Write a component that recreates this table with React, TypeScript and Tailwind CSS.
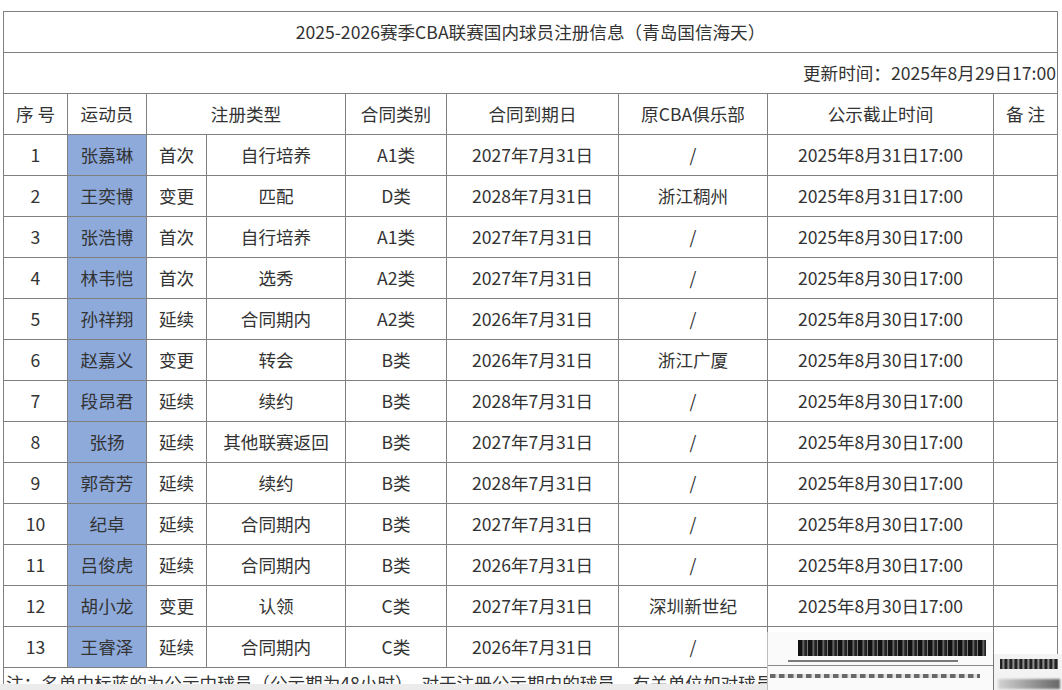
import React from "react";

const rows = [
  ["1", "张嘉琳", "首次", "自行培养", "A1类", "2027年7月31日", "/", "2025年8月31日17:00"],
  ["2", "王奕博", "变更", "匹配", "D类", "2028年7月31日", "浙江稠州", "2025年8月31日17:00"],
  ["3", "张浩博", "首次", "自行培养", "A1类", "2027年7月31日", "/", "2025年8月30日17:00"],
  ["4", "林韦恺", "首次", "选秀", "A2类", "2027年7月31日", "/", "2025年8月30日17:00"],
  ["5", "孙祥翔", "延续", "合同期内", "A2类", "2026年7月31日", "/", "2025年8月30日17:00"],
  ["6", "赵嘉义", "变更", "转会", "B类", "2026年7月31日", "浙江广厦", "2025年8月30日17:00"],
  ["7", "段昂君", "延续", "续约", "B类", "2028年7月31日", "/", "2025年8月30日17:00"],
  ["8", "张扬", "延续", "其他联赛返回", "B类", "2027年7月31日", "/", "2025年8月30日17:00"],
  ["9", "郭奇芳", "延续", "续约", "B类", "2028年7月31日", "/", "2025年8月30日17:00"],
  ["10", "纪卓", "延续", "合同期内", "B类", "2027年7月31日", "/", "2025年8月30日17:00"],
  ["11", "吕俊虎", "延续", "合同期内", "B类", "2026年7月31日", "/", "2025年8月30日17:00"],
  ["12", "胡小龙", "变更", "认领", "C类", "2027年7月31日", "深圳新世纪", "2025年8月30日17:00"],
  ["13", "王睿泽", "延续", "合同期内", "C类", "2026年7月31日", "/", "2025年8月30日17:00"],
];

const cell =
  "h-[41px] border-r border-b border-[#808080] flex items-center justify-center whitespace-nowrap";

export default function App() {
  return (
    <div
      className="relative w-[1062px] h-[690px] overflow-hidden bg-white text-[#333] text-[17.6px]"
      style={{ fontFamily: '"Noto Sans CJK SC", "Noto Sans", sans-serif' }}
    >
      <div className="h-[684px] overflow-hidden pt-[11px] pl-[3px]">
        <div className="w-[1055px] border-l border-t border-[#808080] grid grid-cols-[64px_79px_60px_139px_101px_172px_149px_226px_64px]">
          <div className={`${cell} col-span-9`}>2025-2026赛季CBA联赛国内球员注册信息（青岛国信海天）</div>
          <div className={`${cell} col-span-9 !justify-end pr-[1px]`}>更新时间：2025年8月29日17:00</div>
          <div className={cell}>序 号</div>
          <div className={cell}>运动员</div>
          <div className={`${cell} col-span-2`}>注册类型</div>
          <div className={cell}>合同类别</div>
          <div className={cell}>合同到期日</div>
          <div className={cell}>原CBA俱乐部</div>
          <div className={cell}>公示截止时间</div>
          <div className={cell}>备 注</div>
          {rows.map((r) => (
            <React.Fragment key={r[0]}>
              <div className={cell}>{r[0]}</div>
              <div className={`${cell} bg-[#8eaadb]`}>{r[1]}</div>
              <div className={cell}>{r[2]}</div>
              <div className={cell}>{r[3]}</div>
              <div className={cell}>{r[4]}</div>
              <div className={cell}>{r[5]}</div>
              <div className={cell}>{r[6]}</div>
              <div className={cell}>{r[7]}</div>
              <div className={cell}></div>
            </React.Fragment>
          ))}
          <div className="col-span-9 h-[41px] border-r border-[#808080] flex items-start pt-[2px] pl-[2px] whitespace-nowrap overflow-hidden">
            注：名单中标蓝的为公示中球员（公示期为48小时），对于注册公示期内的球员，有关单位如对球员注册信息有异议的，可在公示期内提出
          </div>
        </div>
      </div>
      <div className="h-[6px] bg-[#ebebeb]"></div>

      {/* scanned watermark overlay */}
      <div className="absolute left-[767px] top-[632px] w-[226px] h-[58px] bg-[#fafafa] border-l border-[#bdbdbd]">
        <div className="mt-[8px] ml-[30px] w-[188px] h-[16px] bg-[repeating-linear-gradient(90deg,#111_0px,#111_4px,#777_5px,#222_7px,#222_9px,#cfcfcf_10px)] blur-[0.7px]"></div>
        <div className="mt-[4px] ml-[20px] w-[170px] h-[2px] bg-[#7a7a7a] blur-[0.6px]"></div>
        <div className="mt-[3px] w-[226px] h-[1px] bg-[#8a8a8a]"></div>
        <div className="mt-[8px] ml-[2px] w-[210px] h-[4px] bg-[repeating-linear-gradient(90deg,#444_0px,#444_5px,#ddd_6px,#ddd_9px)] blur-[0.6px] opacity-80"></div>
      </div>
      <div className="absolute left-[993px] top-[654px] w-[69px] h-[36px] bg-[#f3f3f3] border-l border-[#777]">
        <div className="mt-[5px] ml-[6px] w-[58px] h-[10px] bg-[repeating-linear-gradient(90deg,#222_0px,#222_2px,#aaa_3px,#333_5px)] blur-[0.6px]"></div>
        <div className="mt-[10px] ml-[4px] w-[62px] h-[10px] bg-[linear-gradient(90deg,#ccc,#444)] blur-[1px] opacity-80"></div>
      </div>
    </div>
  );
}
